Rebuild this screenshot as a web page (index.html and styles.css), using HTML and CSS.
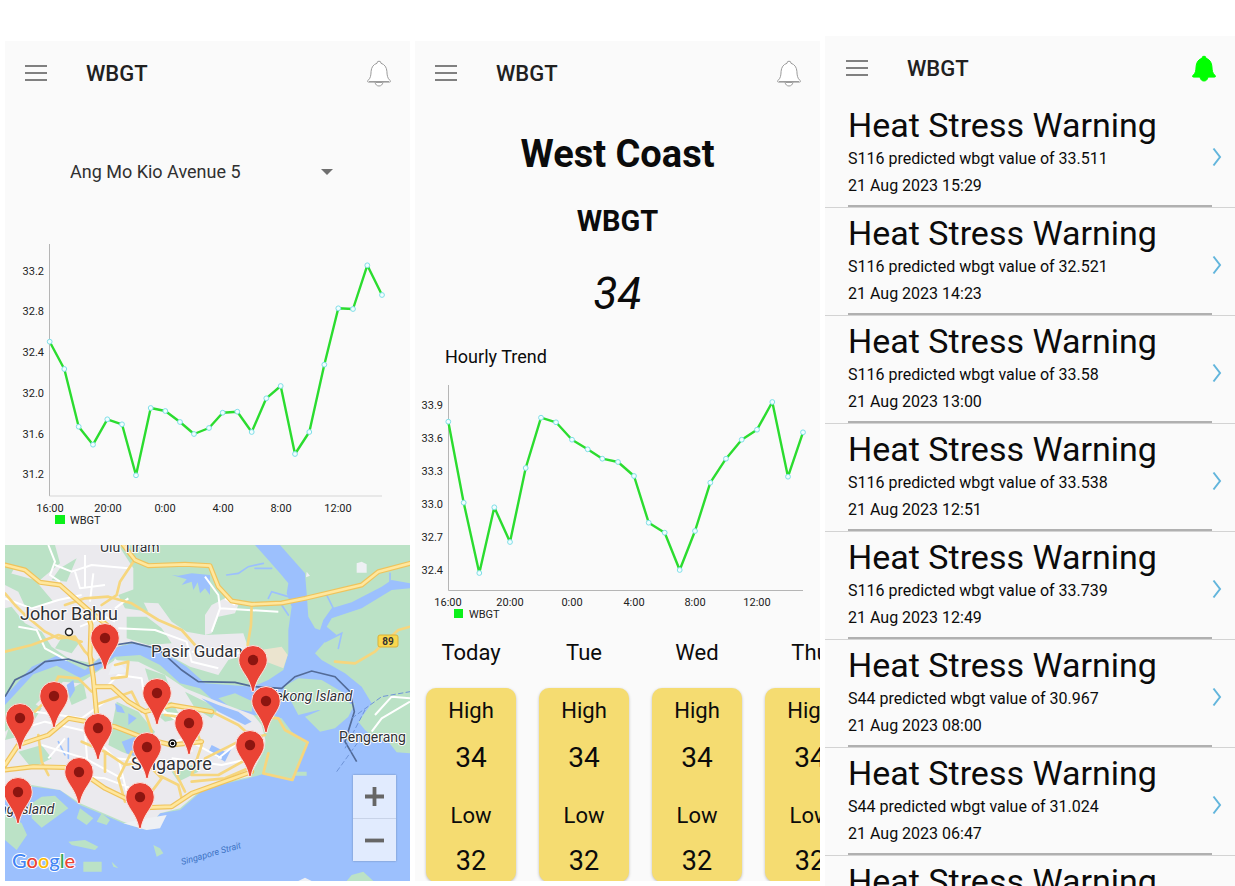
FILE: index.html
```html
<!DOCTYPE html>
<html lang="en">
<head>
<meta charset="utf-8">
<meta name="viewport" content="width=device-width, initial-scale=1">
<title>WBGT</title>
<link rel="stylesheet" href="styles.css">
</head>
<body>
<svg class="defs" aria-hidden="true">
  <symbol id="menu" viewBox="0 0 22 16"><path d="M0 1h22M0 8h22M0 15h22" stroke="#808080" stroke-width="2" fill="none"/></symbol>
  <symbol id="bell" viewBox="0 0 24 27"><path d="M12 1.2a2 2 0 0 1 2 2.1c3.600 1 5.600 4 5.900 8 .2 4.200.5 7 3.200 9.200.8.800.5 1.600-.6 1.600H16c-.5 2.700-2 3.900-4 3.900s-3.500-1.200-4-3.900H1.500c-1.100 0-1.400-.8-.6-1.600C3.600 18.300 3.900 15.500 4.100 11.300c.3-4 2.300-7 5.900-8a2 2 0 0 1 2-2.100z"/><path class="rim" d="M2 21.500h20M8.500 22.500h7" fill="none"/></symbol>
  <symbol id="chev" viewBox="0 0 10 20"><path d="M1.500 1.500L8 10L1.500 18.500" fill="none" stroke="#62b5dc" stroke-width="2"/></symbol>
  <symbol id="pin" viewBox="0 0 32 50"><path d="M16 1.500A14.300 14.300 0 0 0 1.700 16C1.700 26 12.500 32 15 47.500h2C19.500 32 30.300 26 30.300 16A14.300 14.300 0 0 0 16 1.500z" fill="#ea4335" stroke="#fbe4df" stroke-width="1"/><circle cx="16" cy="16" r="5.200" fill="#8c1510"/></symbol>
</svg>
<div class="page">
  <section class="screen">
    <header class="bar">
      <button class="icon-btn" aria-label="Menu"><svg class="menu"><use href="#menu"/></svg></button>
      <h1 class="bar-title">WBGT</h1>
      <button class="icon-btn" aria-label="Notifications"><svg class="bell"><use href="#bell"/></svg></button>
    </header>
    <div class="picker">
      <div class="picker-box">
        <select class="picker-select" aria-label="Station"><option>Ang Mo Kio Avenue 5</option></select>
        <svg class="caret" viewBox="0 0 12 6"><path d="M0 0h12L6 6z" fill="#6f6f6f"/></svg>
      </div>
    </div>
    <svg class="chart" viewBox="0 0 405 310" role="img" aria-label="WBGT by hour, Ang Mo Kio Avenue 5">
      <path class="axis" d="M44.500 9V261"/><path class="axis axis-soft" d="M44.500 261H377"/>
      <g class="tick tick-y"><text x="39" y="40">33.2</text><text x="39" y="80">32.8</text><text x="39" y="121">32.4</text><text x="39" y="162">32.0</text><text x="39" y="203">31.6</text><text x="39" y="243">31.2</text></g>
      <g class="tick tick-x"><text x="45" y="277">16:00</text><text x="103" y="277">20:00</text><text x="160" y="277">0:00</text><text x="218" y="277">4:00</text><text x="276" y="277">8:00</text><text x="333" y="277">12:00</text></g>
      <rect class="key" x="50" y="280" width="10" height="9"/><text class="tick" x="65" y="289">WBGT</text>
      <polyline class="line" points="44.7,106.7 59.3,134 73.7,191.7 88,209.7 102.3,184.3 117,189.3 131,240.3 145.7,173 160.3,176 175,187 189,199 204,193 217.7,177.7 232.3,176.7 246.7,197 261.3,163.3 275.7,151 290,219 304.3,197 319.3,129.7 333.3,73.3 348,74 362.3,30.3 377,60"/>
    </svg>
    <div class="map">
      <svg class="map-art" viewBox="0 0 405 336" role="img" aria-label="Map of Singapore">
        <svg width="405" height="336" viewBox="0 0 1215 1008">
          <rect width="1215" height="1008" fill="#9cc0fd"/>
          <g fill="#bbe2c6">
            <path d="M0 0H750L790 45L825 85L850 115L845 145L860 185L850 255L850 325L835 375L790 405L745 425L600 415L545 365L470 318L385 295L325 308L240 375L155 332L80 365L0 455Z"/>
            <path d="M825 0H1215V115L1160 105L1130 125L1040 172L980 190L955 225L945 255L930 250L910 215L905 145L900 85Z"/>
            <path d="M1215 130L1160 135L1070 190L980 220L965 245L995 270L960 290L930 325L950 345L1020 385L1070 425L1100 475L1060 530L1080 555L1110 582L1150 590L1175 622L1215 625Z"/>
            <path d="M835 425L880 400L950 405L1010 440L1045 490L1000 510L940 495L880 510Z"/>
            <path d="M900 515L960 490L1050 475L1030 515L990 550L945 560Z"/>
            <path d="M0 480L85 388L155 362L225 398L280 375L330 335L405 330L465 360L525 415L585 430L650 490L700 520L780 505L830 520L860 560L908 592L865 707L775 687L730 700L600 730L525 795L465 805L425 855L355 835L285 805L225 780L165 735L85 725L0 725Z"/>
            <path d="M640 460L690 445L745 470L740 500L680 490Z"/>
            <path d="M80 775L110 755L150 752L190 790L110 848L80 820ZM0 800L50 835L66 870L35 915L0 885ZM190 890L240 885L280 905L270 915L200 900ZM235 950h55v30h-55zM225 790l40 30-20 20-30-20zM290 805l25 20-10 15-30-10zM445 900l20 10 10 15-20 10zM320 950l20 20-15-5z"/>
            <path d="M1025 1008L1040 990L1075 980L1105 1008ZM870 680h35v12h-35z"/>
          </g>
          <path d="M880 1008l20-10 20 10z" fill="#eef0f4"/>
          <!-- built-up areas -->
          <g fill="#ebeaee">
            <path d="M30 65L105 105L165 55L150 0H340L385 70L385 140L350 170L460 175L500 230L545 260L600 270L715 265L735 325L670 345L640 390L555 365L470 318L385 290L325 308L260 355L190 340L140 305L110 260L60 235L20 185L0 190V120Z"/>
            <path d="M600 210L620 180L660 160L700 180L690 205L640 215L620 265L600 270Z"/>
            <path d="M80 720L165 735L225 775L285 800L355 830L425 850L465 805L525 790L600 725L735 695L785 600L770 540L745 510L640 470L540 430L480 390L400 350L330 345L270 385L225 415L175 410L120 450L70 500L0 560V720Z"/>
          </g>
          <path d="M735 320L830 305L848 330L835 370L770 345Z" fill="#ebe4cf"/>
          <g fill="#eef0f4"><path d="M1055 55l15-5 15 8v25h-30zM905 80l10 12-12 5zM330 340l40 40-60 10z"/><path d="M355 835l70-15 60-10-20 40-40 5z"/></g>
          <g fill="#bbe2c6">
            <path d="M0 80L90 105L145 170L65 195L40 140L0 120ZM165 70L215 40L185 110L140 105ZM340 150L395 130L430 200L360 190ZM175 270L225 290L200 325L150 310ZM365 215L425 215L470 250L500 295L430 300L365 280ZM480 190L560 195L600 250L545 255Z"/>
            <path d="M335 470L400 500L450 560L400 640L350 620L310 600ZM20 520L80 470L110 490L60 570L0 585ZM430 485L500 470L530 520L480 530ZM540 440L640 490L620 520L570 490ZM785 560L830 540L900 592L862 702L770 682ZM185 440l50-30 10 50-45 20zM420 370l60 20 15 40-60-10zM40 620l70-20 30 40-60 30zM500 680l60-20 20 20-60 30z"/>
          </g>
          <g fill="#9cc0fd">
            <path d="M500 90L520 92L560 85L615 90V150L600 130L585 145L578 112L565 135L560 110L530 120L545 103Z"/>
            <path d="M185 420l20-15 5 30-15 25zM330 475l20 10 10 20-25-5zM350 590l40-15 40 30-35 30-30-10zM370 505l25 15-25 20z"/>
            <path d="M620 600l40 20 20-10-20 40-50-30zM590 460l50 20 60 20 40 30-20 10-80-40z"/>
          </g>
          <!-- creeks -->
          <g fill="none" stroke="#9cc0fd" stroke-width="5" stroke-linecap="round">
            <path d="M775 55L730 65L700 85L665 90M800 70L750 70M850 155L800 140L790 160M985 190L965 150M850 210L830 180M1155 125V85M1110 140L1070 165M960 290L1010 265L1000 310M190 580v60M160 590l20 40"/>
          </g>
          <!-- minor roads -->
          <g fill="none" stroke="#fff" stroke-width="6" stroke-linejoin="round">
            <path d="M130 0L150 50L135 90L165 110M150 60L200 80L260 60L370 70M210 80L225 130L300 120M240 30v100M265 85L255 170M0 160L80 190L160 165L230 150M40 245L95 255L120 310L185 345M330 190L370 160M225 245L300 215L330 230M340 250L450 255L545 290L560 350L640 370M560 320L740 325M600 95L640 150L645 190L820 200M645 190L620 260M660 160L690 180"/>
            <path d="M20 560L120 530L250 560L330 640L440 650M90 500L230 520L300 470M110 600L240 640L350 700M180 690L300 700L420 745M430 410L480 500L560 560M300 430L340 390L410 400L420 470M480 600L540 580L650 640M500 640L650 660L740 640M640 640L690 600L770 590M130 640L180 580M240 560L250 690M340 640L370 760M450 500L540 510L560 620M1110 510L1160 455L1215 460M1100 560L1130 520L1215 470"/>
          </g>
          <!-- arterial roads -->
          <g fill="none" stroke="#f6d67e" stroke-width="8" stroke-linejoin="round" stroke-linecap="round">
            <path d="M0 145L30 180L60 210L120 260L160 280L210 275L240 320L265 345M0 320L80 300L160 270L230 290M180 180L240 160L310 155L380 175L460 225L530 255L570 300M385 50L345 110L335 150L290 180M740 180L738 240L728 300M990 350L1050 355L1110 320L1130 300L1180 255L1215 245"/>
            <path d="M270 425L320 425L370 470L420 500L500 480L620 500L700 540L745 580M90 500L130 460L160 395L220 400L260 440M270 480L380 440L410 500M330 360L370 350L365 395L320 400M100 570L110 650L130 690M300 620L360 660L420 650L470 700L440 740L430 790M380 620L340 700L360 770M480 510L560 520L590 600L560 690L640 690L730 640L770 620M500 660L540 740M600 640L700 590L780 570M230 590L300 620L300 680M460 690l60 30 10 40M420 500L440 560M770 515L820 520L840 555L908 592L862 705L775 685L790 625M560 710L660 700L730 670"/>
          </g>
          <!-- expressways: a dark casing, then the light fill -->
          <path class="casing" d="M0 60L60 75L105 112L165 120L210 160L250 195L330 260M355 0L390 45L430 62L540 58L615 62L640 125L680 168L740 178L830 174L900 160L1070 120L1120 80L1215 55M245 195L258 240L255 330L265 400L275 510L270 560M0 675L85 665L210 668L300 730L420 788L500 785L560 745L740 680M0 660L40 600L130 570L190 520L330 545L420 580L500 600L590 590M270 425L320 425L370 470L420 500L500 480L620 500"/>
          <path class="highway" d="M0 60L60 75L105 112L165 120L210 160L250 195L330 260M355 0L390 45L430 62L540 58L615 62L640 125L680 168L740 178L830 174L900 160L1070 120L1120 80L1215 55M245 195L258 240L255 330L265 400L275 510L270 560M0 675L85 665L210 668L300 730L420 788L500 785L560 745L740 680M0 660L40 600L130 570L190 520L330 545L420 580L500 600L590 590M270 425L320 425L370 470L420 500L500 480L620 500"/>
          <!-- state border and ferry lines -->
          <path d="M0 455L30 405L80 380L120 350L190 342L250 363L300 350L330 300L380 292L460 312L530 375L580 410L690 412L745 425L830 430L870 395L920 378L990 395L1035 440L1048 500L1020 590L1055 650" fill="none" stroke="#536b98" stroke-width="5"/>
          <path d="M995 680L1060 590M1040 520L1130 455L1215 440M1020 610L1080 495" fill="none" stroke="#6f94d8" stroke-width="3" stroke-dasharray="16 7"/>
        </svg>
        <rect x="373" y="90" width="20" height="12" rx="2" fill="#f9d74f" stroke="#d9b13a"/>
        <text class="shield" x="383" y="100">89</text>
        <g class="place">
          <text class="city" x="15" y="75">Johor Bahru</text><text class="town" x="146" y="112">Pasir Gudang</text><text class="city" x="126" y="225">Singapore</text>
          <text class="small" x="95" y="7">Ulu Tiram</text><text class="small" x="334" y="197">Pengerang</text>
          <text class="small isle" x="263" y="156">Tekong Island</text><text class="small isle" x="-33" y="269">Jurong Island</text>
        </g>
        <text class="strait" x="177" y="320" transform="rotate(-16 177 320)">Singapore Strait</text>
        <circle cx="64" cy="87" r="3.500" fill="#fff" stroke="#222" stroke-width="1.500"/>
        <circle cx="167.500" cy="198.500" r="3.500" fill="#fff" stroke="#111" stroke-width="1.500"/><circle cx="167.500" cy="198.500" r="1.800"/>
        <g>
          <use href="#pin" x="84" y="77" width="32" height="50"/><use href="#pin" x="232" y="99" width="32" height="50"/><use href="#pin" x="33" y="135" width="32" height="50"/>
          <use href="#pin" x="136" y="132" width="32" height="50"/><use href="#pin" x="245" y="140" width="32" height="50"/><use href="#pin" x="-1" y="157" width="32" height="50"/>
          <use href="#pin" x="168" y="162" width="32" height="50"/><use href="#pin" x="77" y="167" width="32" height="50"/><use href="#pin" x="126" y="186" width="32" height="50"/>
          <use href="#pin" x="229" y="184" width="32" height="50"/><use href="#pin" x="58" y="211" width="32" height="50"/><use href="#pin" x="-3" y="231" width="32" height="50"/><use href="#pin" x="119" y="236" width="32" height="50"/>
        </g>
        <text class="brand" x="7" y="323"><tspan fill="#4285f4">G</tspan><tspan fill="#ea4335">o</tspan><tspan fill="#fbbc05">o</tspan><tspan fill="#4285f4">g</tspan><tspan fill="#34a853">l</tspan><tspan fill="#ea4335">e</tspan></text>
      </svg>
      <div class="zoom">
        <button class="zoom-btn" aria-label="Zoom in"><svg class="sign" viewBox="0 0 20 20"><path d="M0 10h20M10 0v20"/></svg></button>
        <button class="zoom-btn" aria-label="Zoom out"><svg class="sign" viewBox="0 0 20 20"><path d="M0 10h20"/></svg></button>
      </div>
    </div>
  </section>

  <section class="screen">
    <header class="bar">
      <button class="icon-btn" aria-label="Menu"><svg class="menu"><use href="#menu"/></svg></button>
      <h1 class="bar-title">WBGT</h1>
      <button class="icon-btn" aria-label="Notifications"><svg class="bell"><use href="#bell"/></svg></button>
    </header>
    <div class="reading">
      <h2 class="region">West Coast</h2>
      <p class="metric">WBGT</p>
      <p class="value">34</p>
    </div>
    <h3 class="trend">Hourly Trend</h3>
    <svg class="chart" viewBox="0 0 405 250" role="img" aria-label="WBGT by hour, West Coast">
      <path class="axis" d="M33.500 10V215.500H388"/>
      <g class="tick tick-y"><text x="28" y="34">33.9</text><text x="28" y="67">33.6</text><text x="28" y="100">33.3</text><text x="28" y="133">33.0</text><text x="28" y="166">32.7</text><text x="28" y="199">32.4</text></g>
      <g class="tick tick-x"><text x="33" y="231">16:00</text><text x="95" y="231">20:00</text><text x="157" y="231">0:00</text><text x="219" y="231">4:00</text><text x="280" y="231">8:00</text><text x="342" y="231">12:00</text></g>
      <rect class="key" x="39" y="234" width="9" height="9"/><text class="tick" x="54" y="243">WBGT</text>
      <polyline class="line" points="33.3,46.7 48.7,127.7 64.3,198 79.3,132.3 95,167 110.7,93 126,42.7 141,47.3 157,64.7 172.7,74.3 187.3,83.7 203,87 219,101 233.7,147.7 249.7,157.7 264.7,195 280,156 295.3,107.7 311,83.7 326.7,64.7 342,54.7 357.3,27 373,101.7 388,57.3"/>
    </svg>
    <div class="days">
      <div class="day"><h4 class="day-name">Today</h4><div class="card"><span class="label">High</span><span class="high">34</span><span class="label">Low</span><span class="low">32</span></div></div>
      <div class="day"><h4 class="day-name">Tue</h4><div class="card"><span class="label">High</span><span class="high">34</span><span class="label">Low</span><span class="low">32</span></div></div>
      <div class="day"><h4 class="day-name">Wed</h4><div class="card"><span class="label">High</span><span class="high">34</span><span class="label">Low</span><span class="low">32</span></div></div>
      <div class="day"><h4 class="day-name">Thu</h4><div class="card"><span class="label">High</span><span class="high">34</span><span class="label">Low</span><span class="low">32</span></div></div>
    </div>
  </section>

  <section class="screen screen-list">
    <header class="bar">
      <button class="icon-btn" aria-label="Menu"><svg class="menu"><use href="#menu"/></svg></button>
      <h1 class="bar-title">WBGT</h1>
      <button class="icon-btn" aria-label="Notifications"><svg class="bell bell-on"><use href="#bell"/></svg></button>
    </header>
    <ul class="alerts">
      <li><a class="alert" href="#a1"><div class="alert-body"><strong class="alert-title">Heat Stress Warning</strong><span class="alert-text">S116 predicted wbgt value of 33.511</span><span class="alert-text">21 Aug 2023 15:29</span></div><svg class="chev"><use href="#chev"/></svg></a></li>
      <li><a class="alert" href="#a2"><div class="alert-body"><strong class="alert-title">Heat Stress Warning</strong><span class="alert-text">S116 predicted wbgt value of 32.521</span><span class="alert-text">21 Aug 2023 14:23</span></div><svg class="chev"><use href="#chev"/></svg></a></li>
      <li><a class="alert" href="#a3"><div class="alert-body"><strong class="alert-title">Heat Stress Warning</strong><span class="alert-text">S116 predicted wbgt value of 33.58</span><span class="alert-text">21 Aug 2023 13:00</span></div><svg class="chev"><use href="#chev"/></svg></a></li>
      <li><a class="alert" href="#a4"><div class="alert-body"><strong class="alert-title">Heat Stress Warning</strong><span class="alert-text">S116 predicted wbgt value of 33.538</span><span class="alert-text">21 Aug 2023 12:51</span></div><svg class="chev"><use href="#chev"/></svg></a></li>
      <li><a class="alert" href="#a5"><div class="alert-body"><strong class="alert-title">Heat Stress Warning</strong><span class="alert-text">S116 predicted wbgt value of 33.739</span><span class="alert-text">21 Aug 2023 12:49</span></div><svg class="chev"><use href="#chev"/></svg></a></li>
      <li><a class="alert" href="#a6"><div class="alert-body"><strong class="alert-title">Heat Stress Warning</strong><span class="alert-text">S44 predicted wbgt value of 30.967</span><span class="alert-text">21 Aug 2023 08:00</span></div><svg class="chev"><use href="#chev"/></svg></a></li>
      <li><a class="alert" href="#a7"><div class="alert-body"><strong class="alert-title">Heat Stress Warning</strong><span class="alert-text">S44 predicted wbgt value of 31.024</span><span class="alert-text">21 Aug 2023 06:47</span></div><svg class="chev"><use href="#chev"/></svg></a></li>
      <li><a class="alert" href="#a8"><div class="alert-body"><strong class="alert-title">Heat Stress Warning</strong></div></a></li>
    </ul>
  </section>
</div>
<script src="charts.js"></script>
</body>
</html>
```

FILE: styles.css
```css
* { box-sizing: border-box; }
body { margin: 0; background: #fff; color: #0b0b0b; font-family: Roboto, "Liberation Sans", sans-serif; }
h1, h2, h3, h4, p, ul { margin: 0; padding: 0; font-weight: 400; }
ul { list-style: none; }
button { border: 0; padding: 0; background: none; font: inherit; color: inherit; cursor: pointer; }
svg { display: block; }
.defs { position: absolute; width: 0; height: 0; }

.page { display: grid; grid-template-columns: 405fr 405fr 410fr; grid-template-rows: minmax(0, 1fr); gap: 5px; height: 100vh; padding-left: 5px; overflow: hidden; }
.screen { min-width: 0; margin: 41px 0 5px; background: #fafafa; overflow: hidden; }
.screen-list { margin: 36px 0 0; }

.bar { display: flex; align-items: center; height: 64px; padding: 0 19px 0 20px; }
.screen-list .bar { height: 64px; padding-left: 21px; }
.bar-title { flex: 1; padding-left: 39px; font-size: 22px; font-weight: 500; color: #212121; }
.menu { width: 22px; height: 16px; }
.bell { width: 24px; height: 27px; fill: #fff; stroke: #9b9b9b; stroke-width: 1; }
.bell .rim { stroke: #d5d5d5; }
.bell-on { fill: #0f0; stroke: #0f0; }

.picker { height: 130px; padding: 47px 77px 0 65px; }
.picker-box { position: relative; }
.picker-select { width: 100%; height: 40px; padding: 0; border: 0; background: transparent; appearance: none; font: 18px/20px Roboto, "Liberation Sans", sans-serif; color: #303030; }
.caret { position: absolute; right: 0; top: 17px; width: 12px; height: 6px; pointer-events: none; }

.chart, .map-art { width: 100%; height: auto; }
.axis { fill: none; stroke: #b5b5b5; stroke-width: 1; }
.axis-soft { stroke: #d6d6d6; }
.tick { font-size: 11px; fill: #222; }
.tick-y { text-anchor: end; }
.tick-x { text-anchor: middle; }
.key { fill: #0cf01a; }
.line { fill: none; stroke: #2bdc2f; stroke-width: 2.4; stroke-linejoin: round; }
.dot { fill: #f2fdff; stroke: #7fdfe8; stroke-width: 1; }

.map { position: relative; }
.casing, .highway { fill: none; stroke-linejoin: round; stroke-linecap: round; }
.casing { stroke: #efc35c; stroke-width: 15; }
.highway { stroke: #ffe79d; stroke-width: 8; }
.place text { fill: #2f3136; stroke: #fff; stroke-width: 2; paint-order: stroke; stroke-linejoin: round; }
.city { font-size: 18px; }
.town { font-size: 17px; }
.small { font-size: 14px; }
.isle { font-style: italic; }
.strait { font-size: 9px; font-style: italic; fill: #3d73c4; }
.shield { font-size: 10px; font-weight: 700; text-anchor: middle; fill: #333; }
.brand { font: 500 20px Lato, Roboto, sans-serif; stroke: #fff; stroke-width: 2; paint-order: stroke; }
.zoom { position: absolute; right: 14px; bottom: 20px; width: 43px; background: #e1ebfe; box-shadow: 0 0 2px rgba(0, 0, 0, .3); }
.zoom-btn { display: grid; place-items: center; width: 100%; height: 43px; }
.zoom-btn + .zoom-btn { border-top: 1px solid #c8d3e8; }
.sign { width: 19px; height: 19px; fill: none; stroke: #666; stroke-width: 4; }

.reading { text-align: center; }
.region { padding-top: 25px; font-size: 38px; line-height: 48px; font-weight: 700; }
.metric { padding-top: 23px; font-size: 29px; line-height: 40px; font-weight: 700; }
.value { padding-top: 27px; font-size: 44px; line-height: 52px; font-style: italic; }
.trend { padding: 25px 0 6px 30px; font-size: 18px; line-height: 24px; }

.days { display: flex; gap: 23px; padding-left: 11px; }
.day { flex: none; width: 90px; text-align: center; font-size: 22px; }
.day-name { padding: 13px 0 20px; line-height: 30px; }
.card { display: flex; flex-direction: column; height: 194px; padding-top: 8px; border-radius: 10px; background: #f5dc71; box-shadow: 0 1px 3px rgba(0, 0, 0, .25); }
.label { line-height: 30px; }
.high { padding: 12px 0 23px; font-size: 28px; line-height: 40px; }
.low { padding-top: 13px; font-size: 27px; line-height: 34px; }

.alert { display: flex; align-items: center; height: 108px; padding: 0 13px 0 23px; border-bottom: 1px solid #d3d3d3; color: #0b0b0b; text-decoration: none; }
.alert-body { flex: 1; align-self: stretch; padding-top: 5px; border-bottom: 2px solid #b0b0b0; white-space: nowrap; }
.alert-title { display: block; font-size: 34px; line-height: 40px; font-weight: 400; }
.alert-text { display: block; font-size: 16px; line-height: 27px; }
.chev { width: 10px; height: 20px; margin-top: 6px; }
```

FILE: charts.js
```javascript
// Put a round marker on every point of each chart line.
document.querySelectorAll('.line').forEach(function (line) {
  Array.from(line.points).forEach(function (p) {
    var c = document.createElementNS('http://www.w3.org/2000/svg', 'circle');
    c.setAttribute('class', 'dot');
    c.setAttribute('cx', p.x);
    c.setAttribute('cy', p.y);
    c.setAttribute('r', 2.4);
    line.parentNode.appendChild(c);
  });
});
```
